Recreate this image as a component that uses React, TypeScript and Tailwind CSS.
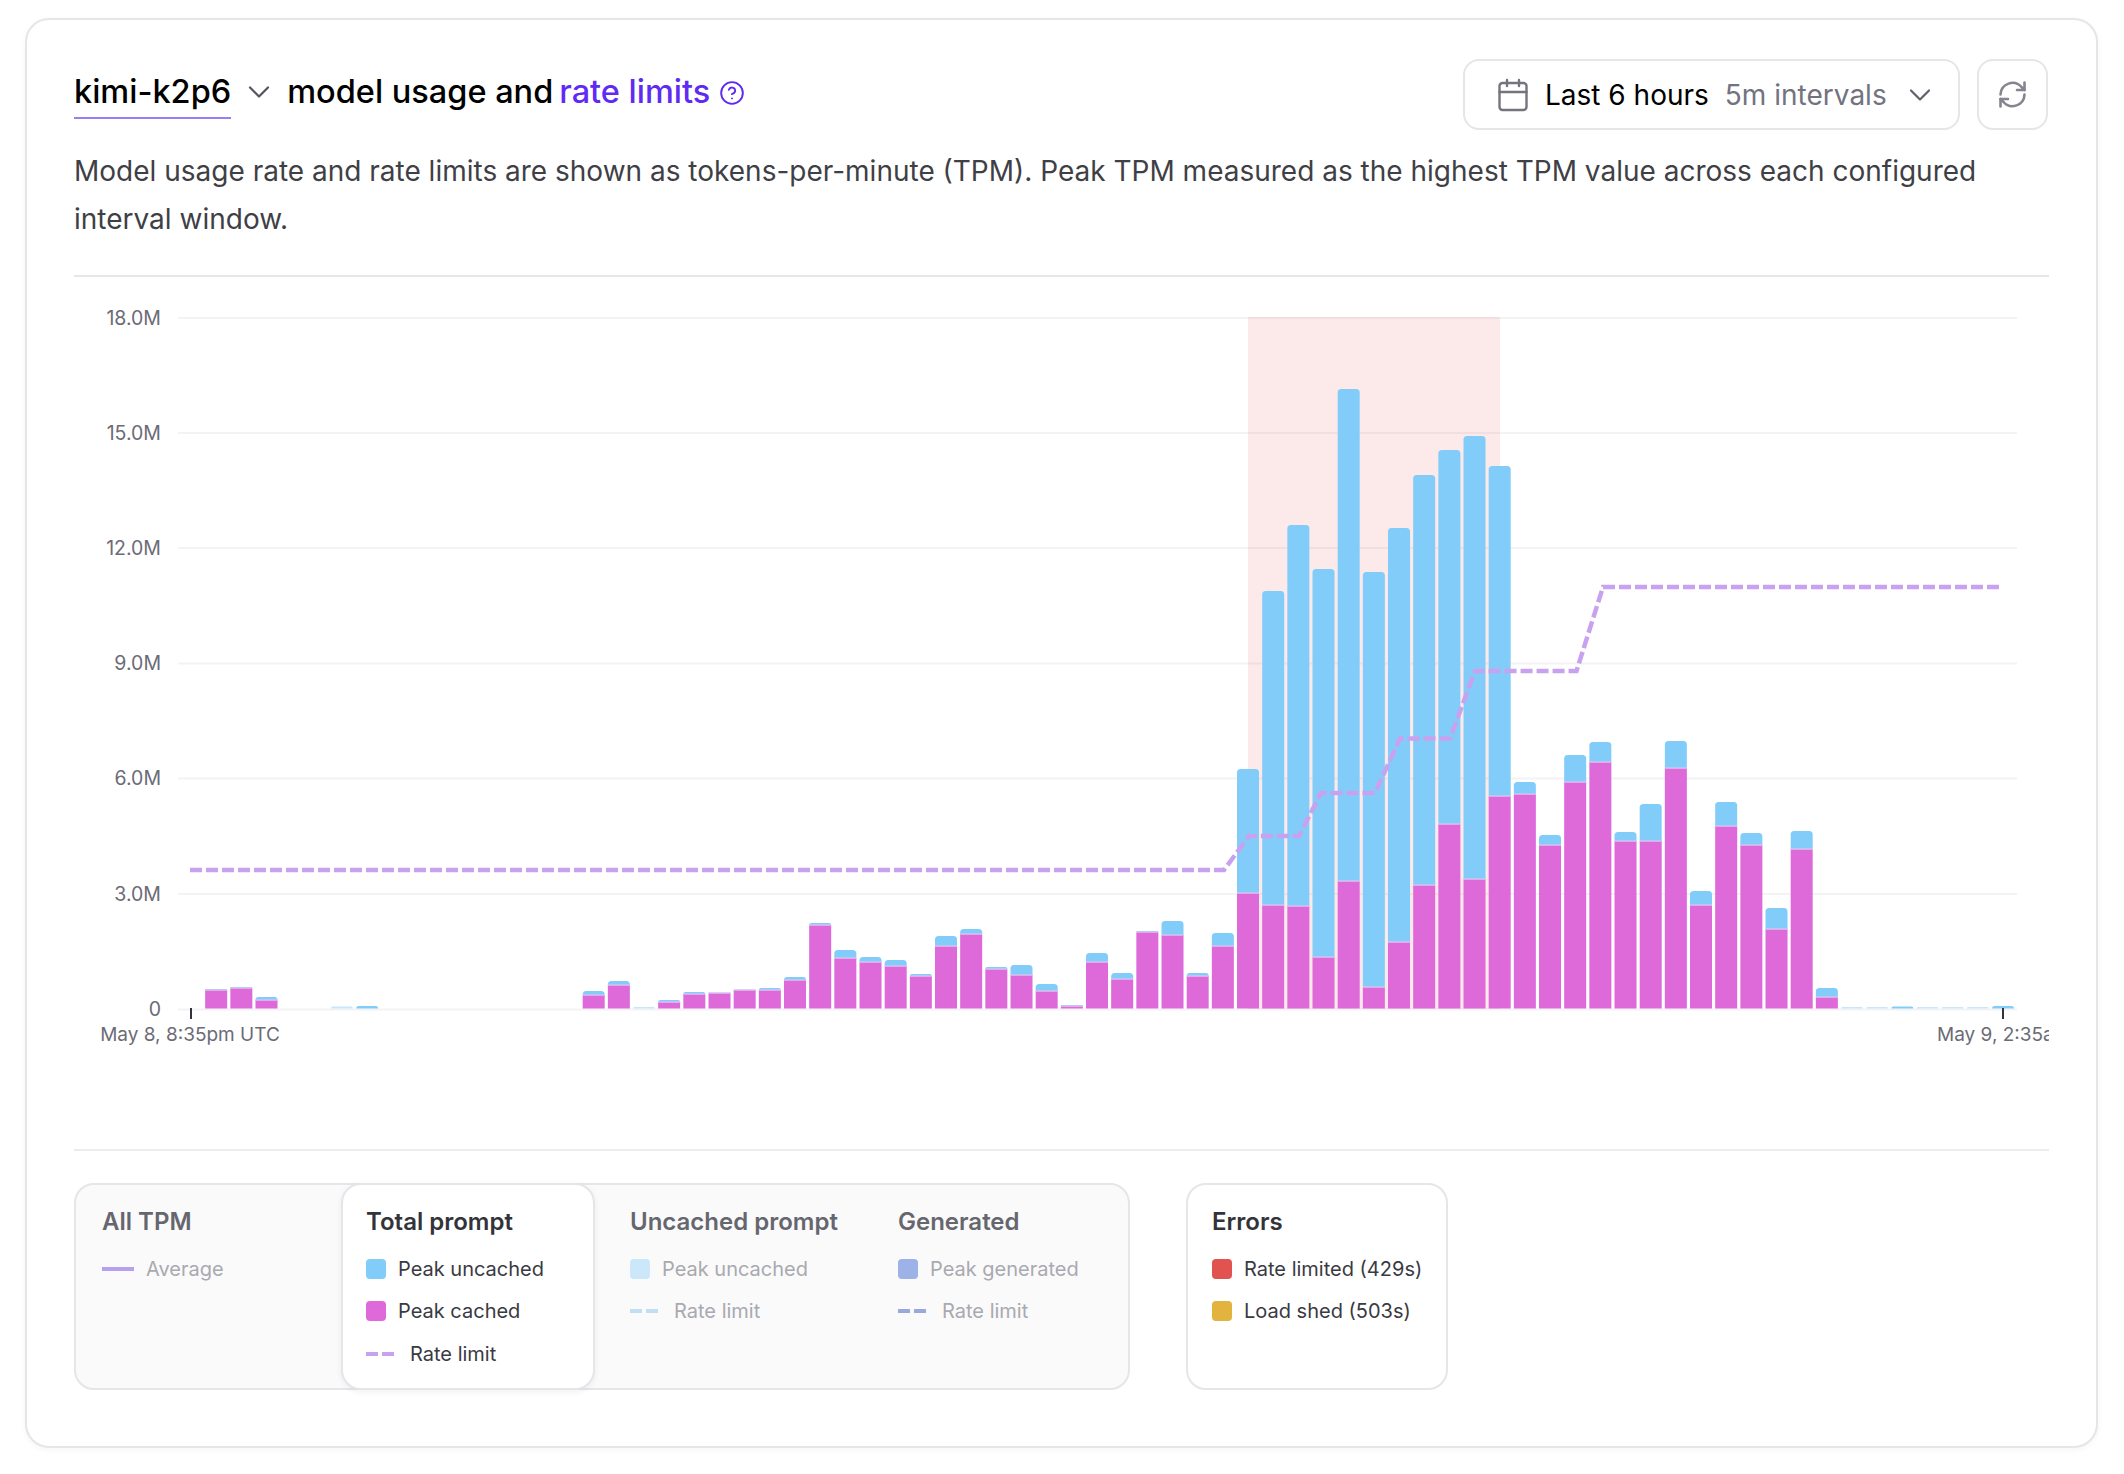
import React from 'react';
import { Calendar, ChevronDown, CircleHelp } from 'lucide-react';

// [blue top, pink top] in page pixels, one per 5m interval. 0 = nothing drawn
const bars: [number, number][] = [
  [0, 0], [989, 990], [987, 988], [997, 1000], [0, 0], [0, 0], [1006.5, 0], [1006, 0],
  [0, 0], [0, 0], [0, 0], [0, 0], [0, 0], [0, 0], [0, 0], [0, 0],
  [991, 995], [981, 985], [1007, 0], [1000, 1002], [992, 994], [992.5, 993], [989.5, 990], [988, 990],
  [977, 980], [923, 925], [950, 958], [957, 962], [960, 966], [974, 976], [936, 946], [929, 934],
  [967, 969], [965, 975], [984, 991], [1005, 1006], [953, 962], [973, 979], [931, 932], [921, 935],
  [973, 976], [933, 946], [769, 893], [591, 905], [525, 906], [569, 957], [389, 881], [572, 987],
  [528, 942], [475, 885], [450, 824], [436, 879], [466, 796], [782, 794], [835, 845], [755, 782],
  [742, 762], [832, 841], [804, 841], [741, 768], [891, 905], [802, 826], [833, 845], [908, 929],
  [831, 849], [988, 997], [1007, 0], [1007, 0], [1006.5, 0], [1007, 0], [1007, 0], [1007, 0],
  [1006, 0],
];

const faint = new Set([6, 18, 66, 67, 69, 70, 71]);
const gridLines = [
  ['18.0M', 318], ['15.0M', 433], ['12.0M', 548], ['9.0M', 663.5], ['6.0M', 778.5], ['3.0M', 894], ['0', 1009.5],
] as const;
const bottom = 1008.5;

const topRounded = (x: number, y: number, w: number, h: number, r: number) => {
  const c = Math.min(r, h);
  return `M${x} ${y + h}V${y + c}Q${x} ${y} ${x + c} ${y}H${x + w - c}Q${x + w} ${y} ${x + w} ${y + c}V${y + h}Z`;
};

const UsageChart = () => (
  <svg viewBox="74 277 1975 872" className="block w-[1975px] h-[872px]">
    {gridLines.map(([label, y]) => (
      <g key={label}>
        <rect x={178} y={y - 1} width={1839} height={2} fill="#f3f3f5" />
        <text x={161} y={y + 6.5} textAnchor="end" fontSize={19.5} fill="#6b6b76">{label}</text>
      </g>
    ))}

    {/* 429 window */}
    <rect x={1248} y={317} width={252} height={692} fill="#e5484d" opacity={0.12} />

    {bars.map(([blue, pink], k) => {
      if (!blue) return null;
      const x = 191 + 25.167 * k - 11;
      const blueEnd = pink || bottom;
      return (
        <g key={k}>
          <path d={topRounded(x, blue, 22, blueEnd - blue, 3.5)} fill={faint.has(k) ? '#c9e6fb' : '#82ccfa'} />
          {pink > 0 && <rect x={x} y={pink} width={22} height={bottom - pink} fill="#de69d9" />}
          {pink > 0 && <rect x={x} y={pink - 0.5} width={22} height={1.2} fill="#e9c3ee" />}
        </g>
      );
    })}

    <polyline
      points="190,870 1224,870 1249,836 1299,836 1321,793 1375,793 1400,738.5 1450,738.5 1475,671 1576.5,671 1603,587 2001,587"
      fill="none"
      stroke="#c9a2ef"
      strokeWidth={4.5}
      strokeDasharray="12 4"
    />

    <rect x={190} y={1008} width={2} height={11} fill="#33333c" />
    <rect x={2002} y={1008} width={2} height={11} fill="#33333c" />
    <text x={190} y={1041} textAnchor="middle" fontSize={19} fill="#6b6b76">May 8, 8:35pm UTC</text>
    <text x={1937} y={1041} fontSize={19} fill="#6b6b76">May 9, 2:35am UTC</text>
  </svg>
);

const RefreshIcon = () => (
  <svg viewBox="0 0 27 27" className="w-[27px] h-[27px] text-[#85858f]" fill="none" stroke="currentColor" strokeWidth={2.6} strokeLinecap="round" strokeLinejoin="round">
    <path d="M1.5 13.5A12 12 0 0 1 22.5 6L25.5 9" />
    <path d="M25.5 1.5V9H18" />
    <path d="M25.5 13.5A12 12 0 0 1 4.5 21L1.5 18" />
    <path d="M1.5 25.5V18H9" />
  </svg>
);

const Swatch = ({ className }: { className: string }) => (
  <span className={`w-5 h-5 rounded-[4px] shrink-0 ${className}`} />
);

const DashSwatch = ({ className }: { className: string }) => (
  <span className="flex gap-[4px] w-[29px] mr-[3px] shrink-0">
    <span className={`h-1 w-[12px] ${className}`} />
    <span className={`h-1 w-[12px] ${className}`} />
  </span>
);

const Row = ({ children, muted }: { children: React.ReactNode; muted?: boolean }) => (
  <div className={`flex items-center gap-3 h-[42.5px] text-[20px] ${muted ? 'text-[#a9a9b0]' : 'text-[#3a3a42]'}`}>
    {children}
  </div>
);

const Heading = ({ children, muted }: { children: React.ReactNode; muted?: boolean }) => (
  <div className={`text-[24px] leading-8 font-semibold mb-[9.5px] ${muted ? 'text-[#66666f]' : 'text-[#33333a]'}`}>
    {children}
  </div>
);

export default function App() {
  return (
    <div className="w-[2124px] h-[1474px] bg-white pt-[18px] pl-[25px] font-['Inter',sans-serif]">
      <div className="w-[2073px] h-[1430px] border-2 border-[#e5e5ea] rounded-3xl px-[47px] pt-[39px] bg-white shadow-[0_2px_6px_rgba(0,0,0,0.04)]">
        <div className="flex justify-between items-start h-[71px]">
          <div className="flex items-start pt-[13px] text-[32.5px] leading-10 font-medium text-black">
            <span className="border-b-2 border-[#9a7ef5] pb-[5px]">kimi-k2p6</span>
            <ChevronDown className="w-9 h-9 mx-[10px] mt-[2px] text-[#55555f]" strokeWidth={1.5} />
            <span>model usage and</span>
            <span className="ml-[6px] text-[#5f2bf2]">rate limits</span>
            <CircleHelp className="w-[26px] h-[26px] ml-[9px] mt-[8px] text-[#5f2bf2]" strokeWidth={1.75} />
          </div>
          <div className="flex gap-[17px] pr-px">
            <button className="flex items-center w-[497px] h-[71px] border-2 border-[#e5e5ea] rounded-2xl pl-[29.5px] text-[28px]">
              <Calendar className="w-9 h-9 text-[#74747f]" strokeWidth={1.6} />
              <span className="ml-[14.5px] text-black">Last 6 hours</span>
              <span className="ml-[16px] text-[#73737f]">5m intervals</span>
              <ChevronDown className="w-9 h-9 ml-[15px] text-[#62626d]" strokeWidth={1.5} />
            </button>
            <button className="flex items-center justify-center w-[71px] h-[71px] border-2 border-[#e5e5ea] rounded-2xl">
              <RefreshIcon />
            </button>
          </div>
        </div>

        <p className="mt-[17px] text-[28px] leading-[48px] text-[#3f3f46] pb-[32px] border-b-2 border-[#e5e5ea]">
          Model usage rate and rate limits are shown as tokens-per-minute (TPM). Peak TPM measured as the highest TPM value across each configured interval window.
        </p>

        <UsageChart />

        <div className="border-t-2 border-[#ececf0] pt-[32px] flex gap-[56px]">
          <div className="flex w-[1056px] h-[207px] border-2 border-[#e5e5ea] rounded-[20px] bg-[#fafafb]">
            <div className="w-[264.5px] shrink-0 pl-[26px] pt-[21px]">
              <Heading muted>All TPM</Heading>
              <Row muted>
                <span className="w-8 h-1 bg-[#b8a0f0]" />
                Average
              </Row>
            </div>
            <div className="w-[254px] shrink-0 -my-[2px] pl-[23.5px] pt-[21px] bg-white border-2 border-[#e5e5ea] rounded-[20px] shadow-[0_2px_6px_rgba(0,0,0,0.06)]">
              <Heading>Total prompt</Heading>
              <Row><Swatch className="bg-[#82ccfa]" />Peak uncached</Row>
              <Row><Swatch className="bg-[#de69d9]" />Peak cached</Row>
              <Row><DashSwatch className="bg-[#c9a2ef]" />Rate limit</Row>
            </div>
            <div className="w-[303.5px] shrink-0 pl-[35.5px] pt-[21px]">
              <Heading muted>Uncached prompt</Heading>
              <Row muted><Swatch className="bg-[#cbe8fb]" />Peak uncached</Row>
              <Row muted><DashSwatch className="bg-[#c0dff3]" />Rate limit</Row>
            </div>
            <div className="pt-[21px]">
              <Heading muted>Generated</Heading>
              <Row muted><Swatch className="bg-[#9db2e6]" />Peak generated</Row>
              <Row muted><DashSwatch className="bg-[#98a9dc]" />Rate limit</Row>
            </div>
          </div>

          <div className="w-[262px] h-[207px] border-2 border-[#e5e5ea] rounded-[20px] pl-[24px] pt-[21px]">
            <Heading>Errors</Heading>
            <Row><Swatch className="bg-[#e0534f]" />Rate limited (429s)</Row>
            <Row><Swatch className="bg-[#e2b33e]" />Load shed (503s)</Row>
          </div>
        </div>
      </div>
    </div>
  );
}
